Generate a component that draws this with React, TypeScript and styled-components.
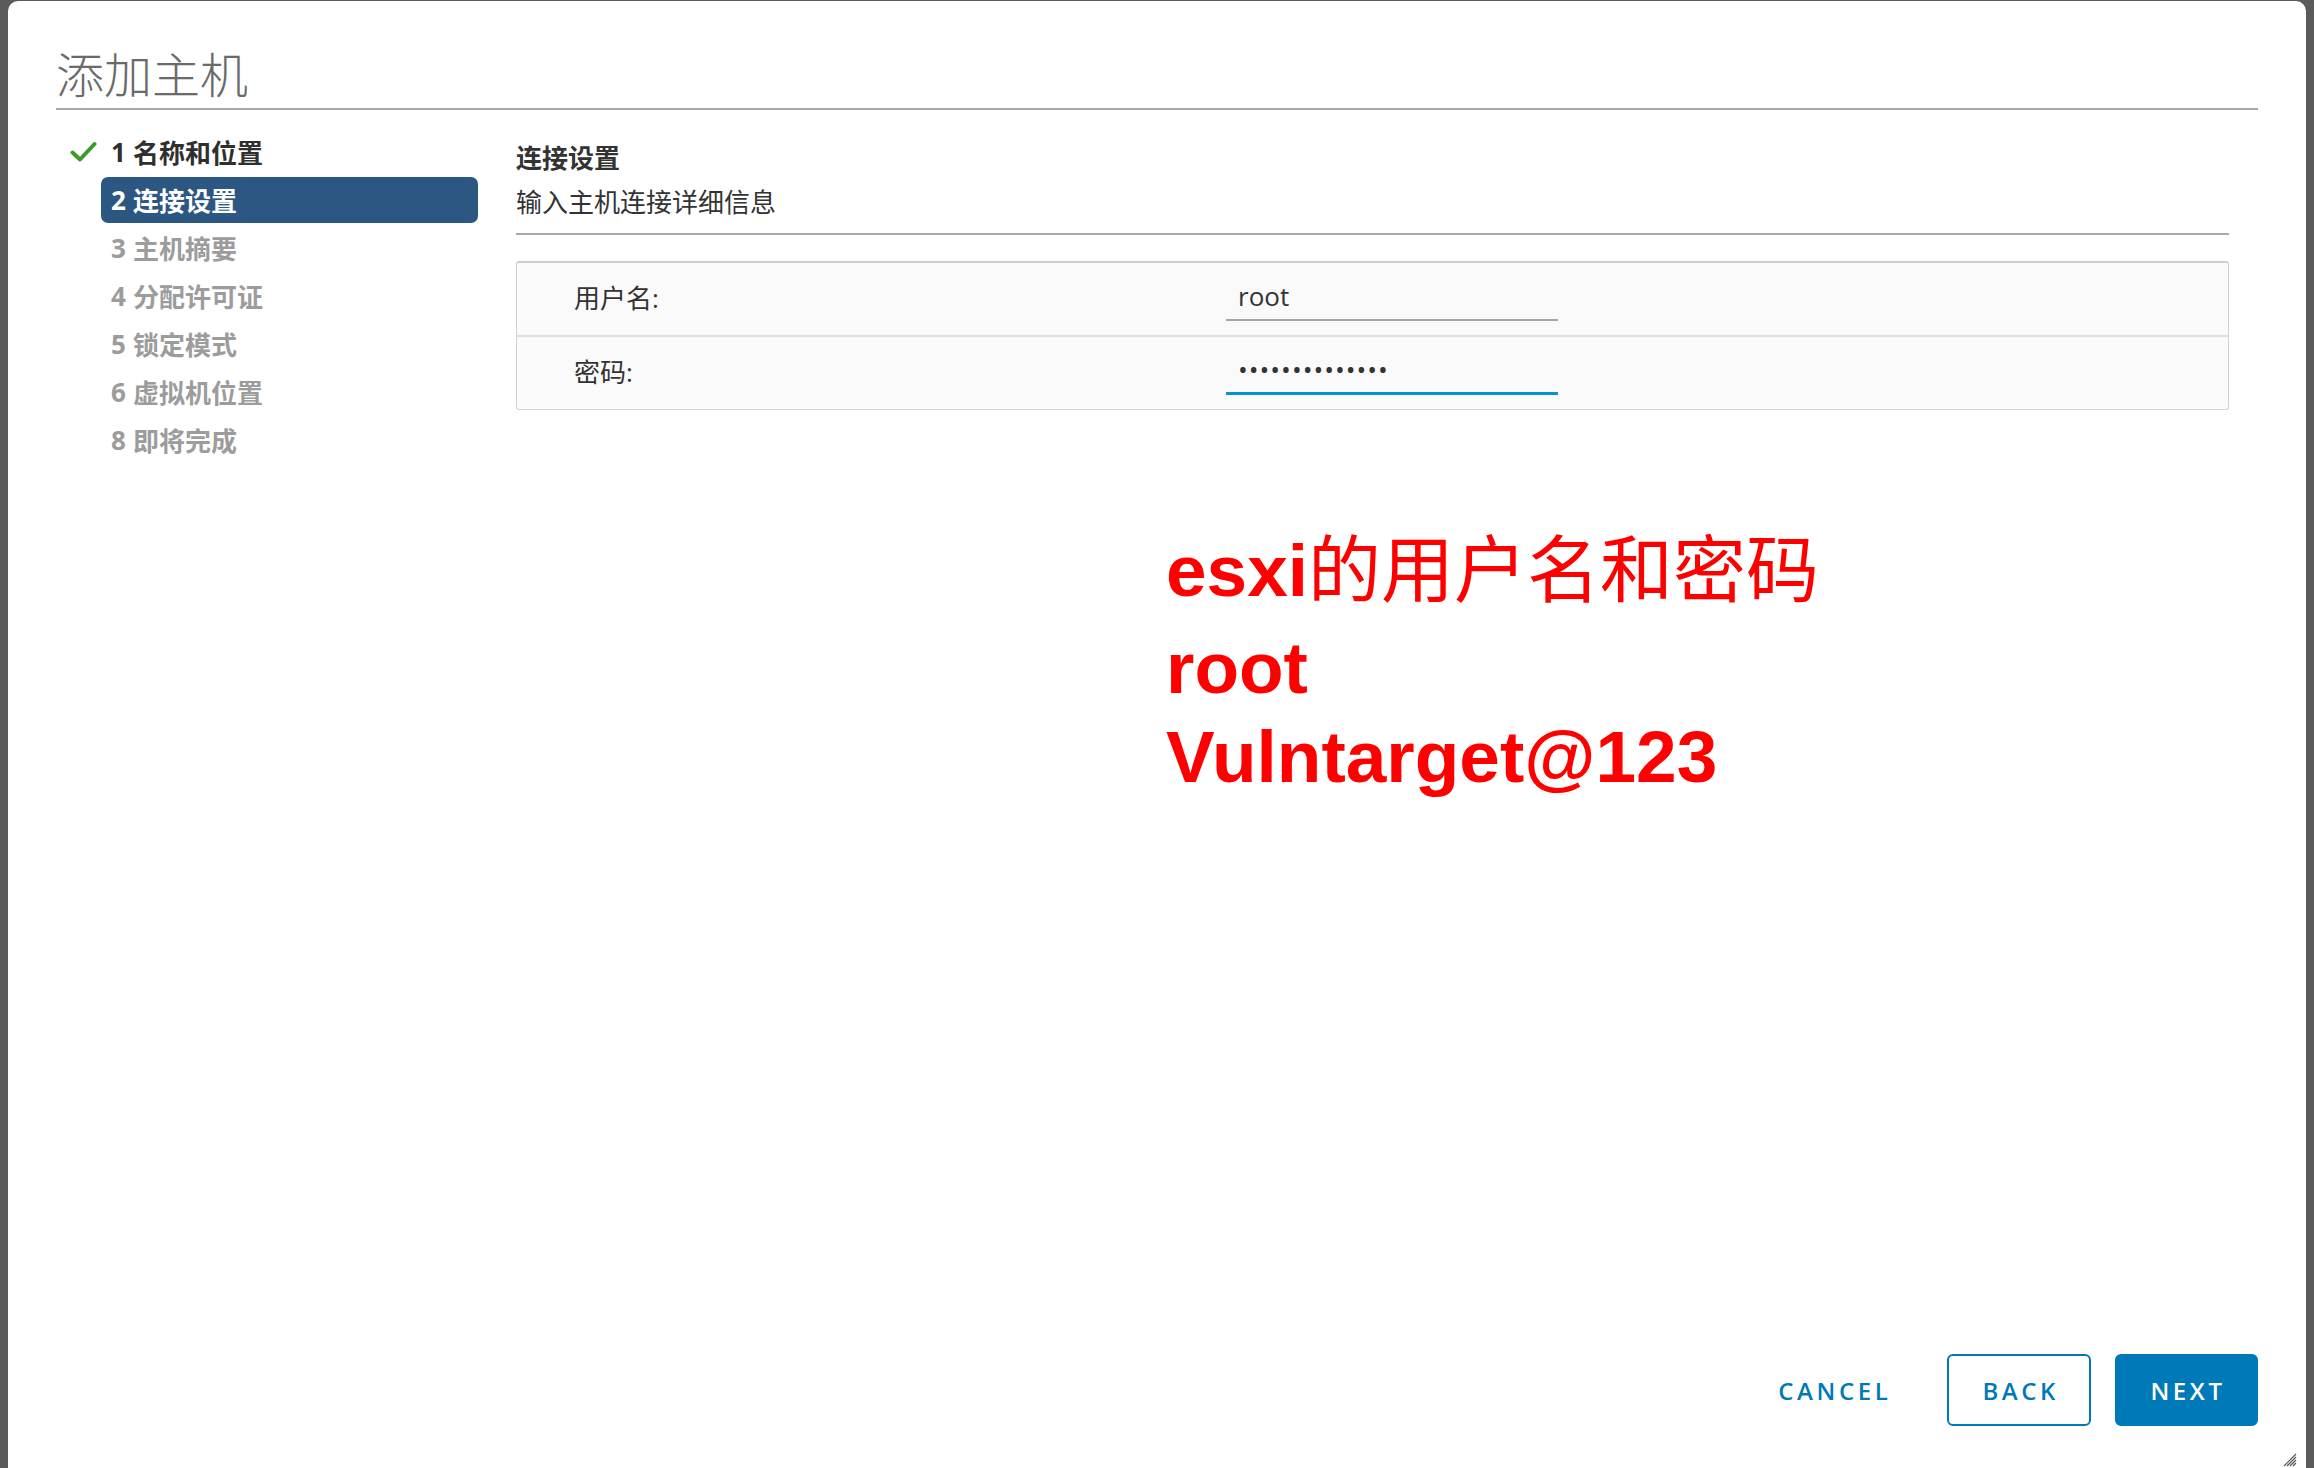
import React from 'react'
import styled, {createGlobalStyle} from 'styled-components'

const GlobalStyle = createGlobalStyle`
  *, *::before, *::after {
    box-sizing: border-box;
  }
  html, body {
    margin: 0;
    padding: 0;
  }
  body {
    background: #5b5b5b;
    font-family: 'Open Sans', 'Noto Sans CJK SC', sans-serif;
    color: #333;
  }
`

const Backdrop = styled.div`
  height: 1468px;
  display: flex;
  padding: 1px 8px 0;
  overflow: hidden;
`

const Modal = styled.div`
  position: relative;
  flex: 1;
  display: flex;
  flex-direction: column;
  background: #fff;
  border-radius: 10px 10px 0 0;
  padding: 0 48px 42px;
`

const Header = styled.header`
  padding: 41px 0 6px;
  border-bottom: 2px solid #a8a8a8;
`

const Title = styled.h1`
  margin: 0;
  font-family: 'Noto Sans CJK SC', sans-serif;
  font-size: 48px;
  line-height: 60px;
  font-weight: 300;
  color: #6a6a6a;
`

const Body = styled.div`
  flex: 1;
  display: flex;
`

const Sidebar = styled.nav`
  width: 460px;
  flex-shrink: 0;
  padding-top: 18px;
`

const StepRow = styled.div`
  display: flex;
  align-items: center;
  height: 48px;
`

const StepMark = styled.span`
  width: 45px;
  display: flex;
  justify-content: flex-end;
  padding-right: 4px;
`

type StepState = 'done' | 'active' | 'todo'

const stepColor = {done: '#2f2f2f', active: '#fff', todo: '#9c9c9c'}

const StepLabel = styled.div<{$state: StepState}>`
  width: 377px;
  height: 46px;
  display: flex;
  align-items: center;
  gap: 7px;
  padding-left: 10px;
  border-radius: 7px;
  font-size: 26px;
  font-weight: 700;
  background: ${p => (p.$state === 'active' ? '#2d5783' : 'transparent')};
  color: ${p => stepColor[p.$state]};
`

const Main = styled.section`
  flex: 1;
  display: flex;
  flex-direction: column;
  padding: 26px 29px 0 0;
`

const SectionHead = styled.div`
  padding-bottom: 9px;
  border-bottom: 2px solid #a8a8a8;
`

const SectionTitle = styled.h2`
  margin: 0;
  font-size: 26px;
  line-height: 44px;
  font-weight: 700;
  color: #333;
`

const SectionSub = styled.p`
  margin: 0;
  font-size: 26px;
  line-height: 44px;
  color: #333;
`

const FormBox = styled.div`
  margin-top: 26px;
  border: 1px solid #d2d2d2;
  border-top: 2px solid #cdcdcd;
  border-radius: 3px;
  background: #fafafa;
`

const FormRow = styled.div`
  box-sizing: content-box;
  height: 72px;
  display: grid;
  grid-template-columns: 652px 332px;
  align-items: center;
  padding-left: 57px;

  & + & {
    border-top: 2px solid #dfdfdf;
  }
`

const FieldLabel = styled.label`
  padding-bottom: 5px;
  font-size: 26px;
  color: #333;
`

const Field = styled.input<{$focused?: boolean}>`
  width: 332px;
  height: 44px;
  padding: 0 12px 5px;
  border: none;
  border-bottom: ${p => (p.$focused ? '3px solid #0095d3' : '2px solid #a4a4a4')};
  background: transparent;
  font-family: 'Open Sans', sans-serif;
  font-size: 26px;
  color: #333;
  outline: none;
  letter-spacing: ${p => (p.$focused ? '1px' : '0')};
`

const Note = styled.div`
  margin: 110px 0 0 650px;
  color: #ff0000;
  font-family: 'Liberation Sans', Arial, sans-serif;
  font-weight: 700;
  font-size: 73px;
  line-height: 89px;
`

const NoteLine = styled.div<{$lead?: boolean}>`
  padding-bottom: ${p => (p.$lead ? '8px' : '0')};
`

const NoteCjk = styled.span`
  font-family: 'Noto Sans CJK SC', sans-serif;
  font-weight: 400;
`

const Footer = styled.footer`
  display: flex;
  justify-content: flex-end;
  gap: 24px;
`

type Variant = 'flat' | 'outline' | 'solid'

const Button = styled.button<{$variant: Variant}>`
  height: 72px;
  min-width: 143px;
  padding: 0 30px 0 33px;
  border-radius: 6px;
  border: 2px solid ${p => (p.$variant === 'flat' ? 'transparent' : '#0079b8')};
  background: ${p => (p.$variant === 'solid' ? '#0079b8' : '#fff')};
  color: ${p => (p.$variant === 'solid' ? '#fff' : '#0079b8')};
  font-family: 'Open Sans', sans-serif;
  font-weight: 600;
  font-size: 24px;
  letter-spacing: 3.6px;
  text-transform: uppercase;
  cursor: pointer;
`

const Grip = styled.svg`
  position: absolute;
  right: 8px;
  bottom: 0;
`

const Check = () => (
  <svg width="27" height="22" viewBox="0 0 27 22">
    <path d="M2.5 11.5 L10 18.5 L24.5 3" fill="none" stroke="#3c9b2a" strokeWidth="4" strokeLinecap="round" strokeLinejoin="round" />
  </svg>
)

const steps: {n: number; label: string; state: StepState}[] = [
  {n: 1, label: '名称和位置', state: 'done'},
  {n: 2, label: '连接设置', state: 'active'},
  {n: 3, label: '主机摘要', state: 'todo'},
  {n: 4, label: '分配许可证', state: 'todo'},
  {n: 5, label: '锁定模式', state: 'todo'},
  {n: 6, label: '虚拟机位置', state: 'todo'},
  {n: 8, label: '即将完成', state: 'todo'},
]

export default function App() {
  return (
    <>
      <GlobalStyle />
      <Backdrop>
        <Modal>
          <Header>
            <Title>添加主机</Title>
          </Header>
          <Body>
            <Sidebar>
              {steps.map(s => (
                <StepRow key={s.n}>
                  <StepMark>{s.state === 'done' && <Check />}</StepMark>
                  <StepLabel $state={s.state}>
                    <span>{s.n}</span>
                    <span>{s.label}</span>
                  </StepLabel>
                </StepRow>
              ))}
            </Sidebar>
            <Main>
              <SectionHead>
                <SectionTitle>连接设置</SectionTitle>
                <SectionSub>输入主机连接详细信息</SectionSub>
              </SectionHead>
              <FormBox>
                <FormRow>
                  <FieldLabel htmlFor="user">用户名:</FieldLabel>
                  <Field id="user" defaultValue="root" />
                </FormRow>
                <FormRow>
                  <FieldLabel htmlFor="pass">密码:</FieldLabel>
                  <Field id="pass" type="password" defaultValue="Vulntarget@123" $focused />
                </FormRow>
              </FormBox>
              <Note>
                <NoteLine $lead>
                  esxi<NoteCjk>的用户名和密码</NoteCjk>
                </NoteLine>
                <NoteLine>root</NoteLine>
                <NoteLine>Vulntarget@123</NoteLine>
              </Note>
            </Main>
          </Body>
          <Footer>
            <Button $variant="flat">Cancel</Button>
            <Button $variant="outline">Back</Button>
            <Button $variant="solid">Next</Button>
          </Footer>
          <Grip width="18" height="18" viewBox="0 0 18 18">
            <path d="M16 4 L4 16 M16 7 L7 16 M16 10 L10 16 M16 13 L13 16" stroke="#555" strokeWidth="1.2" />
          </Grip>
        </Modal>
      </Backdrop>
    </>
  )
}
